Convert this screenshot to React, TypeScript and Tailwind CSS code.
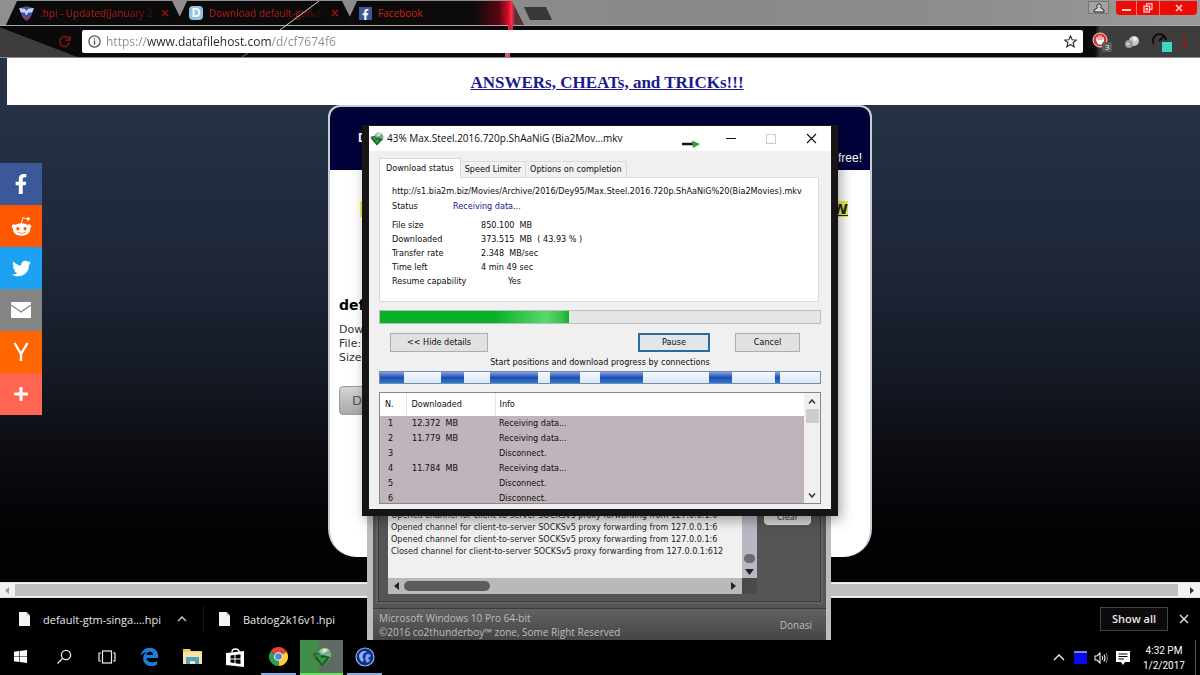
import type { ReactNode } from "react";
import {
  FaFacebookF,
  FaRedditAlien,
  FaTwitter,
  FaPlus,
  FaWindows,
} from "react-icons/fa";

function IdmIcon({ size }: { size: number }) {
  return (
    <svg width={size} height={size} viewBox="0 0 24 24" aria-hidden="true">
      <circle cx="15" cy="9" r="8" fill="#6f9fc0" />
      <path d="M9 5 C11 1 18 0 21 4 C18 7 15 5 13 9 Z" fill="#b9cf6a" />
      <path d="M17 8 L23 8 L22 13 L18 16 Z" fill="#8fb65c" />
      <path d="M14 2 L18 3 L16 7 L13 6 Z" fill="#e2edf5" />
      <path d="M1 8 L8 7 L10 10 L14 10 L22 12 L12 23 L4 14 Z" fill="#125f24" />
      <path d="M4 9 L8 8 L11 13 L18 13 L12 20 Z" fill="#2f9a3f" />
      <path d="M0 11 L4 9 L5 13 Z" fill="#c33a2a" />
    </svg>
  );
}

function ShieldIcon() {
  return (
    <svg width="15" height="15" viewBox="0 0 16 16" aria-hidden="true">
      <path d="M1 2 L8 0 L15 2 Q15 11 8 16 Q1 11 1 2Z" fill="#3450a8" />
      <path d="M0 2 L6 3 L8 5 L10 3 L16 2 L14 7 L10 7 L8 10 L6 7 L2 7Z" fill="#c9d3ee" />
      <path d="M3 9 L7 12 L8 15 L5 13Z M13 9 L9 12 L8 15 L11 13Z" fill="#c03040" />
      <path d="M6 1 L8 3 L10 1Z" fill="#c03040" />
    </svg>
  );
}

function BrowserTab({ icon, title, glow }: { icon: ReactNode; title: string; glow?: boolean }) {
  return (
    <div
      className={
        "-ml-2 flex h-6 w-[178px] items-center pl-[13px] pr-[15px] [clip-path:polygon(11px_0,calc(100%-12px)_0,100%_100%,0_100%)] " +
        (glow
          ? "bg-[linear-gradient(90deg,#0c0a0b_0_72%,#5a0512_86%,#d80a28_91%,#ff3048_93%,#5a3038_95%)]"
          : "bg-[#0b0a0a]")
      }
    >
      <button className="flex min-w-0 flex-1 items-center gap-[6px] text-left">
        <span className="shrink-0">{icon}</span>
        <span
          className={
            "whitespace-nowrap text-[10px] leading-4 " +
            (glow
              ? "text-[#d0200f]"
              : "bg-[linear-gradient(90deg,#c41a12_0_75%,#4a0a06_100%)] bg-clip-text text-transparent")
          }
        >
          {title}
        </span>
      </button>
      <button aria-label="Close tab" className="shrink-0 text-[#a3140f]">
        <svg width="8" height="8" viewBox="0 0 8 8">
          <path d="M1 1 L7 7 M7 1 L1 7" stroke="currentColor" strokeWidth="1.2" />
        </svg>
      </button>
    </div>
  );
}

function BrowserChrome() {
  return (
    <header className="relative bg-[#0a0a0a]">
      <div className="flex h-[26px] items-start border-b border-[#a9a9a9] bg-[linear-gradient(90deg,#8f8f8f,#8b8888_60%,#8d8d8d_80%,#9a9a9a)] pl-[14px] pt-px">
        <BrowserTab icon={<ShieldIcon />} title=".hpi - Updated(January 2" />
        <BrowserTab
          icon={
            <span className="flex h-[14px] w-[14px] items-center justify-center rounded-sm bg-[#8fc3e0] font-['Liberation_Sans'] text-[12px] font-bold leading-none text-white">
              D
            </span>
          }
          title="Download default-gtm-s"
        />
        <BrowserTab
          glow
          icon={
            <span className="flex h-[13px] w-[13px] items-end justify-center bg-[#3b5998] text-white">
              <FaFacebookF size={11} />
            </span>
          }
          title="Facebook"
        />
        <button
          aria-label="New tab"
          className="mt-[6px] h-[13px] w-7 bg-[#383838] [clip-path:polygon(0_0,22px_0,100%_100%,6px_100%)]"
        />
        <div className="flex-1" />
        <button aria-label="Profile" className="flex h-[13px] w-[21px] items-center justify-center border border-[#767676] bg-[#a3a3a3]">
          <svg width="12" height="10" viewBox="0 0 12 10">
            <path d="M6 1 a2 2 0 0 1 1.4 3.6 L11 7 V9 H1 V7 L4.6 4.6 A2 2 0 0 1 6 1Z" fill="#d5d5d5" stroke="#222" strokeWidth="1" />
          </svg>
        </button>
        <div className="ml-[7px] mr-[3px] flex h-[14px] divide-x divide-[#ff7a70] overflow-hidden rounded-b bg-[#ee0a05] text-[#ffd8d4]">
          <button aria-label="Minimize" className="flex w-[21px] items-center justify-center pt-1">
            <svg width="9" height="3"><rect width="9" height="2" fill="currentColor" /></svg>
          </button>
          <button aria-label="Restore" className="flex w-[23px] items-center justify-center">
            <svg width="10" height="10" viewBox="0 0 10 10" fill="none" stroke="currentColor" strokeWidth="1.2">
              <rect x="3.5" y="0.8" width="5.5" height="5.5" />
              <rect x="1" y="3.2" width="5.5" height="5.8" fill="#ee0a05" />
              <rect x="3" y="5.4" width="1.5" height="1.5" />
            </svg>
          </button>
          <button aria-label="Close" className="flex w-[37px] items-center justify-center">
            <svg width="8" height="8" viewBox="0 0 8 8">
              <path d="M1 1 L7 7 M7 1 L1 7" stroke="currentColor" strokeWidth="1.6" />
            </svg>
          </button>
        </div>
      </div>
      <div className="flex h-8 items-center border-b border-[#8a8a8a] bg-[linear-gradient(90deg,transparent_0_1095px,#3d3d3d_1100px)]">
        <div className="flex h-full w-[82px] items-center justify-end bg-[linear-gradient(201deg,#0a0a0a_52%,#3d3b3b_53%)] pr-[11px]">
          <button aria-label="Reload" className="text-[#7d1512]">
            <svg width="13" height="13" viewBox="0 0 14 14" fill="none" stroke="currentColor" strokeWidth="1.8">
              <path d="M11.5 4 A5.3 5.3 0 1 0 12.3 8" />
              <path d="M13 1 V5.5 H8" />
            </svg>
          </button>
        </div>
        <div className="flex h-[23px] flex-1 items-center gap-[5px] rounded-xs bg-white px-[6px]">
          <svg width="13" height="13" viewBox="0 0 13 13" fill="none" stroke="#4a4a4a" aria-hidden="true">
            <circle cx="6.5" cy="6.5" r="5.6" strokeWidth="1.2" />
            <path d="M6.5 5.6 V9.8 M6.5 3.2 V4.6" strokeWidth="1.4" />
          </svg>
          <input
            aria-label="Address"
            defaultValue="https://www.datafilehost.com/d/cf7674f6"
            className="min-w-0 flex-1 bg-[linear-gradient(90deg,#8c8c8c_0_41px,#262626_41px_165px,#8c8c8c_165px)] bg-clip-text text-[12px] leading-5 text-transparent outline-none"
          />
          <button aria-label="Bookmark" className="text-[#333]">
            <svg width="13" height="13" viewBox="0 0 14 14" fill="none" stroke="currentColor" strokeWidth="1.3">
              <path d="M7 1 L8.8 5.1 L13.2 5.4 L9.8 8.3 L10.9 12.7 L7 10.3 L3.1 12.7 L4.2 8.3 L0.8 5.4 L5.2 5.1 Z" />
            </svg>
          </button>
        </div>
        <div className="flex w-[117px] items-center justify-between pl-[9px] pr-[13px]">
          <button aria-label="Ad blocker">
            <svg width="21" height="20" viewBox="0 0 21 20">
              <circle cx="8" cy="8" r="7" fill="#d9322c" stroke="#f4dedd" strokeWidth="1" />
              <path d="M5 8 V5 M7 7 V3.6 M9 7 V3.6 M11 8 V5 M4.6 8 H11.4 L10.4 12 H6.4Z" stroke="#fff" strokeWidth="1.2" fill="#fff" />
              <rect x="10" y="10" width="10" height="10" rx="2" fill="#5b5b5b" />
              <text x="13" y="18" fontSize="8" fill="#fff">3</text>
            </svg>
          </button>
          <button aria-label="Weather">
            <svg width="16" height="14" viewBox="0 0 16 14">
              <circle cx="10" cy="6" r="5" fill="#c9c9c9" />
              <circle cx="5" cy="9" r="4" fill="#9b9b9b" />
              <circle cx="11" cy="4" r="2" fill="#f2f2f2" />
              <circle cx="4" cy="9" r="1.6" fill="#d7d7d7" />
            </svg>
          </button>
          <button aria-label="Speed test">
            <svg width="20" height="20" viewBox="0 0 20 20">
              <path d="M2 12 A6.5 6.5 0 1 1 14 8 M7 9 L12 4" stroke="#0a0a0a" strokeWidth="1.8" fill="none" />
              <rect x="10" y="10" width="10" height="10" fill="#3fd6c2" />
            </svg>
          </button>
          <button aria-label="Menu">
            <svg width="4" height="14" fill="#8c1a17">
              <rect y="1" width="3" height="3" /><rect y="5" width="3" height="3" /><rect y="10" width="3" height="3" />
            </svg>
          </button>
        </div>
      </div>
      <svg className="pointer-events-none absolute left-[240px] top-0" width="90" height="58" aria-hidden="true">
        <path d="M79 1 L40 30" stroke="#d8cfcf" strokeWidth="1" />
        <path d="M8 53 L2 57" stroke="#777" strokeWidth="1" />
      </svg>
      <div className="pointer-events-none absolute left-[508px] top-[25px] h-[5px] w-[5px] bg-[#d82440]" />
      <div className="pointer-events-none absolute left-[505px] top-[53px] h-[4px] w-[5px] bg-[#e0556a]" />
    </header>
  );
}

const shares: { label: string; bg: string; icon: ReactNode }[] = [
  { label: "Facebook", bg: "bg-[#3b5998]", icon: <FaFacebookF size={20} /> },
  { label: "Reddit", bg: "bg-[#ff5700]", icon: <FaRedditAlien size={21} /> },
  { label: "Twitter", bg: "bg-[#1da1f2]", icon: <FaTwitter size={19} /> },
  {
    label: "Email",
    bg: "bg-[#848484]",
    icon: (
      <svg width="20" height="16" viewBox="0 0 20 16">
        <rect width="20" height="16" rx="1" fill="#fff" />
        <path d="M0 3 L10 10 L20 3" stroke="#848484" strokeWidth="1.4" fill="none" />
      </svg>
    ),
  },
  {
    label: "Hacker News",
    bg: "bg-[#ff6600]",
    icon: (
      <svg width="16" height="20" viewBox="0 0 16 20" fill="none" stroke="#fff" strokeWidth="2.4">
        <path d="M1.5 1 L8 12 L14.5 1 M8 11 V19" />
      </svg>
    ),
  },
  { label: "More", bg: "bg-[#ff6550]", icon: <FaPlus size={16} /> },
];

function WebPage() {
  return (
    <main className="relative flex-1 bg-[linear-gradient(180deg,#263247_47px,#222e42_90px,#1f2739_200px,#151a26_310px,#0b0b10_400px,#020204_480px,#020204)]">
      <div className="ml-[7px] flex h-[47px] items-center justify-center bg-white pl-[7px] pt-[2px]">
        <a href="#answers" className="font-['Liberation_Serif',serif] text-[17px] font-bold leading-5 text-[#1a1a8c] underline">
          ANSWERs, CHEATs, and TRICKs!!!
        </a>
      </div>
      <section className="mx-auto w-[544px] rounded-b-[28px] rounded-t-xl border-x-2 border-t-2 border-[#c9ced6] bg-white pb-[142px] font-['DejaVu_Sans',sans-serif] text-black">
        <div className="flex h-[63px] items-end justify-between rounded-t-[10px] bg-[#01013a] px-2 pb-1 text-white">
          <span className="pb-5 pl-5 font-['Liberation_Sans',sans-serif] text-[13px] font-bold leading-4">D</span>
          <span className="font-['Liberation_Sans',sans-serif] text-[12px] leading-4">free!</span>
        </div>
        <a
          href="#download"
          className="ml-auto mr-[22px] mt-[31px] block w-[488px] bg-[#f2ea4a] text-right text-[14px] font-bold leading-4 text-[#222] underline"
        >
          W
        </a>
        <div className="mt-[78px] pl-[9px]">
          <h1 className="text-[14px] font-bold leading-5">def</h1>
          <p className="mt-2 text-[11px] leading-[14px] text-[#333]">
            Dow
            <br />
            File:
            <br />
            Size
          </p>
          <button className="mt-[21px] h-[29px] w-24 rounded border border-[#999] bg-linear-to-b from-[#d5d5d5] to-[#a9a9a9] pl-3 text-left text-[13px] text-[#555]">
            Do
          </button>
        </div>
      </section>
      <nav aria-label="Share" className="absolute left-0 top-[105px] flex flex-col text-white">
        {shares.map((s) => (
          <a key={s.label} href="#share" aria-label={s.label} className={"flex h-[42px] w-[42px] items-center justify-center " + s.bg}>
            {s.icon}
          </a>
        ))}
      </nav>
    </main>
  );
}

function PageScrollbar() {
  return (
    <div className="flex h-4 items-center border-y border-[#e4e4e4] bg-[#f1f1f1]">
      <span className="flex w-[15px] justify-center">
        <svg width="5" height="7"><path d="M4 0 V7 L0 3.5Z" fill="#999" /></svg>
      </span>
      <span className="h-3 flex-1 bg-[#c1bfbe]" />
      <span className="flex w-[22px] justify-center pl-[7px]">
        <svg width="5" height="7"><path d="M0 0 V7 L4 3.5Z" fill="#333" /></svg>
      </span>
    </div>
  );
}

function FileIcon() {
  return (
    <svg width="11" height="14" viewBox="0 0 11 14" aria-hidden="true">
      <path d="M0 0 H7.5 L11 3.5 V14 H0Z" fill="#f4f4f4" />
      <path d="M7.5 0 V3.5 H11" fill="#bbb" />
    </svg>
  );
}

function DownloadShelf() {
  return (
    <div className="flex h-[42px] items-center bg-black pl-[19px] pr-[11px] text-[11px] text-[#e8e8e8]">
      <button className="flex items-center gap-[13px]">
        <FileIcon />
        <span className="pt-[3px]">default-gtm-singa....hpi</span>
      </button>
      <button aria-label="Item options" className="ml-4">
        <svg width="10" height="6" viewBox="0 0 10 6"><path d="M1 5 L5 1 L9 5" stroke="#ccc" strokeWidth="1.4" fill="none" /></svg>
      </button>
      <span className="ml-4 h-7 w-px bg-[#1a1214]" />
      <button className="ml-[15px] flex items-center gap-[13px]">
        <FileIcon />
        <span className="pt-[3px]">Batdog2k16v1.hpi</span>
      </button>
      <div className="flex-1" />
      <button className="h-6 w-[68px] border border-[#444] bg-[#0c0a0b] font-semibold">Show all</button>
      <button aria-label="Close downloads" className="ml-[11px]">
        <svg width="10" height="10" viewBox="0 0 10 10"><path d="M1 1 L9 9 M9 1 L1 9" stroke="#ddd" strokeWidth="1.5" /></svg>
      </button>
    </div>
  );
}

function TaskButton({ label, state, children }: { label: string; state?: "running" | "active"; children: ReactNode }) {
  const tone =
    state === "active"
      ? "border-[#6fe05c] bg-[linear-gradient(90deg,#3f8f4a_0_42%,#5f6a62_46%)]"
      : state === "running"
        ? "border-[#86b0e4]"
        : "border-transparent";
  return (
    <button
      aria-label={label}
      className={"flex h-[35px] items-center justify-center border-b-2 " + (state === "running" ? "mx-1 w-[35px] " : "w-[43px] ") + tone}
    >
      {children}
    </button>
  );
}

function Taskbar() {
  return (
    <footer className="relative z-30 flex h-[35px] items-center bg-black text-white">
      <div className="-ml-px flex items-center">
        <TaskButton label="Start"><FaWindows size={15} /></TaskButton>
        <TaskButton label="Search">
          <svg width="16" height="16" viewBox="0 0 16 16" fill="none" stroke="#eee" strokeWidth="1.3">
            <circle cx="10" cy="6" r="4.6" /><path d="M6.6 9.4 L1.5 14.5" />
          </svg>
        </TaskButton>
        <TaskButton label="Task view">
          <svg width="18" height="14" viewBox="0 0 18 14" fill="none" stroke="#eee" strokeWidth="1.2">
            <rect x="4.5" y="1" width="9" height="12" /><path d="M3 3 H1 V11 H3 M15 3 H17 V11 H15" />
          </svg>
        </TaskButton>
        <TaskButton label="Edge">
          <svg width="19" height="19" viewBox="0 0 24 24" fill="#1b7fdb">
            <path d="M1 11 C2 4 7 1 12.5 1 C19 1 23 6 23 11.5 V14 H8 C8.5 18 12 19.5 15.5 19.5 C18 19.5 20 18.8 21.7 17.8 V22 C19.6 23.2 17 24 14 24 C8 24 4 20 4 14.5 C4 10.5 6.5 7.5 9 6 C6 6.5 3 8.5 1 11Z M8.2 10 H16.5 C16.5 7.5 15 6 12.6 6 C10.3 6 8.6 7.6 8.2 10Z" fillRule="evenodd" />
          </svg>
        </TaskButton>
        <TaskButton label="File Explorer">
          <svg width="19" height="17" viewBox="0 0 19 17">
            <path d="M0 1 H7 L8 3 H19 V16 H0Z" fill="#f0cf6b" />
            <path d="M0 4 H19 V16 H0Z" fill="#f8e4a0" />
            <path d="M3 9 H16 V16 H12 V13 H7 V16 H3Z" fill="#4fa3c7" />
          </svg>
        </TaskButton>
        <TaskButton label="Store">
          <svg width="19" height="20" viewBox="0 0 19 20">
            <path d="M6 5 C6 1 13 1 13 5" stroke="#fff" strokeWidth="1.4" fill="none" />
            <path d="M0 6 L18 4 V20 L0 18Z" fill="#fff" />
            <path d="M4.5 8.6 L8.5 8 V11.5 H4.5Z M9.5 7.9 L14.5 7.2 V11.5 H9.5Z M4.5 12.5 H8.5 V16 L4.5 15.5Z M9.5 12.5 H14.5 V17 L9.5 16.2Z" fill="#000" />
          </svg>
        </TaskButton>
        <TaskButton label="Chrome" state="running">
          <svg width="19" height="19" viewBox="0 0 20 20">
            <path d="M10 10 L1.4 5 A9.9 9.9 0 0 1 18.6 5Z" fill="#e04436" />
            <path d="M10 10 L18.6 5 A9.9 9.9 0 0 1 10 20Z" fill="#fbcc34" />
            <path d="M10 10 L10 20 A9.9 9.9 0 0 1 1.4 5Z" fill="#2fa052" />
            <path d="M10 5.5 H18.8 L18 4 H10Z" fill="#e04436" />
            <circle cx="10" cy="10" r="4.6" fill="#f4f4f4" />
            <circle cx="10" cy="10" r="3.5" fill="#4a86e0" />
          </svg>
        </TaskButton>
        <TaskButton label="Internet Download Manager" state="active"><IdmIcon size={20} /></TaskButton>
        <TaskButton label="SSH client" state="running">
          <svg width="20" height="20" viewBox="0 0 20 20">
            <circle cx="10" cy="10" r="9" fill="#123a9a" stroke="#8fb2ee" strokeWidth="1.2" />
            <circle cx="10" cy="10" r="7" fill="none" stroke="#0b1f5c" strokeWidth="0.8" />
            <path d="M4 8 C6 4 9 3 12 5 L9 6 C7 8 7 11 9 13 L7 15 C5 13 4 11 4 8Z" fill="#8fb2ee" />
            <path d="M11 8 C13 6 15 7 16 9 L13 11 L15 14 L12 16 L10 12Z" fill="#7ea5e8" />
          </svg>
        </TaskButton>
      </div>
      <div className="flex-1" />
      <div className="flex items-center">
        <button aria-label="Hidden icons" className="mr-[9px]">
          <svg width="12" height="7" viewBox="0 0 12 7"><path d="M1 6 L6 1 L11 6" stroke="#eee" strokeWidth="1.4" fill="none" /></svg>
        </button>
        <svg width="13" height="13" className="mr-[7px]" aria-hidden="true">
          <rect width="13" height="13" fill="#0a0af0" /><rect width="13" height="2" fill="#7d86d8" />
        </svg>
        <button aria-label="Volume" className="mr-2">
          <svg width="14" height="12" viewBox="0 0 14 12" fill="none" stroke="#eee" strokeWidth="1.1">
            <path d="M1 4 H3 L6 1 V11 L3 8 H1Z" /><path d="M8 4 Q9.5 6 8 8 M10 2.5 Q12 6 10 9.5" /><path d="M12 1 Q14.5 6 12 11" stroke="#777" />
          </svg>
        </button>
        <button aria-label="Notifications">
          <svg width="14" height="14" viewBox="0 0 14 14">
            <path d="M0 0 H14 V11 H9 L7 14 L5 11 H0Z" fill="#fff" /><path d="M2.5 3 H11.5 M2.5 5.5 H11.5 M2.5 8 H8" stroke="#000" strokeWidth="1" />
          </svg>
        </button>
      </div>
      <div className="ml-[13px] mr-[10px] w-[42px] whitespace-nowrap text-center font-['Roboto',sans-serif] text-[10px] leading-[15px]">
        4:32 PM
        <br />
        1/2/2017
      </div>
      <span className="mr-1 h-[35px] w-px bg-[#555]" />
    </footer>
  );
}

const log = [
  "Opened channel for client-to-server SOCKSv5 proxy forwarding from 127.0.0.1:6",
  "Opened channel for client-to-server SOCKSv5 proxy forwarding from 127.0.0.1:6",
  "Opened channel for client-to-server SOCKSv5 proxy forwarding from 127.0.0.1:6",
  "Closed channel for client-to-server SOCKSv5 proxy forwarding from 127.0.0.1:612",
];

function SshWindow() {
  return (
    <section className="absolute left-[367px] top-[500px] z-10 w-[464px] border-l-[6px] border-r-[5px] border-[#bdbdbd] bg-[#555555] text-[#bdbdbd]">
      <div className="mx-[5px] flex border-x border-b border-[#3a3a3a] pb-[7px] pl-[9px] shadow-[0_0_0_2px_#626262]">
        <div className="w-[354px] bg-[#f0f0f0]">
          <div className="h-[78px] overflow-hidden whitespace-nowrap pl-[3px] pt-[9px] font-['DejaVu_Sans_Condensed','DejaVu_Sans',sans-serif] text-[9px] leading-[12px] text-[#222]">
            {log.map((line, i) => (
              <div key={i}>{line}</div>
            ))}
          </div>
          <div className="flex h-4 items-center bg-[#b9b9bb] px-[6px]">
            <svg width="5" height="8"><path d="M5 0 V8 L0 4Z" fill="#222" /></svg>
            <span className="ml-[5px] h-[10px] w-[86px] rounded-full bg-[#5c5c5c]" />
            <span className="flex-1" />
            <svg width="5" height="8"><path d="M0 0 V8 L5 4Z" fill="#222" /></svg>
          </div>
        </div>
        <div className="flex w-[15px] flex-col items-center bg-[#b8b8c4]">
          <span className="mt-[54px] h-[9px] w-[11px] rounded-full bg-[#6b6b74]" />
          <svg className="mt-[6px]" width="9" height="6"><path d="M0 0 H9 L4.5 6Z" fill="#222" /></svg>
          <span className="mt-auto h-4 w-full bg-[#4a4a4a]" />
        </div>
        <button className="ml-[7px] h-[25px] w-[47px] rounded border border-[#ddd] bg-[#d4d4d4] pt-2 font-['DejaVu_Sans_Condensed','DejaVu_Sans',sans-serif] text-[9px] leading-[14px] text-[#333]">
          Clear
        </button>
      </div>
      <div className="mt-[6px] flex items-center justify-between border-t border-[#3a3a3a] bg-linear-to-b from-[#626262] to-[#444] px-[6px] py-[2px] text-[10px] leading-[14px]">
        <p>
          Microsoft Windows 10 Pro 64-bit
          <br />
          ©2016 co2thunderboy™ zone, Some Right Reserved
        </p>
        <a href="#donasi" className="pr-2">Donasi</a>
      </div>
    </section>
  );
}

const stats = [
  { label: "File size", value: "850.100  MB", pad: "" },
  { label: "Downloaded", value: "373.515  MB  ( 43.93 % )", pad: "" },
  { label: "Transfer rate", value: "2.348  MB/sec", pad: "" },
  { label: "Time left", value: "4 min 49 sec", pad: "" },
  { label: "Resume capability", value: "Yes", pad: "pl-[27px]" },
];

const segments = [24, 37, 23, 26, 48, 12, 30, 20, 44, 66, 23, 43, 5, 40];

const connections = [
  { n: 1, size: "12.372  MB", info: "Receiving data..." },
  { n: 2, size: "11.779  MB", info: "Receiving data..." },
  { n: 3, size: "", info: "Disconnect." },
  { n: 4, size: "11.784  MB", info: "Receiving data..." },
  { n: 5, size: "", info: "Disconnect." },
  { n: 6, size: "", info: "Disconnect." },
];

function DownloadDialog() {
  return (
    <section
      role="dialog"
      aria-label="Download progress"
      className="absolute left-[362px] top-[125px] z-20 w-[476px] border-x-[7px] border-b-[7px] border-t border-[#161414] bg-[#f0f0f0] font-['DejaVu_Sans_Condensed','DejaVu_Sans',sans-serif] text-[9px] text-[#0c0c0c] shadow-[3px_4px_12px_rgba(0,0,0,0.35)]"
    >
      <div className="flex h-[25px] items-center bg-white pl-px pr-[14px]">
        <IdmIcon size={14} />
        <span className="ml-[3px] font-['Open_Sans',sans-serif] text-[10px]">43% Max.Steel.2016.720p.ShAaNiG (Bia2Mov...mkv</span>
        <span className="flex-1" />
        <svg className="mr-[26px] mt-[11px]" width="18" height="8" viewBox="0 0 18 8" aria-hidden="true">
          <path d="M0 4 H12" stroke="#111" strokeWidth="2.5" />
          <path d="M10 0.5 L18 4 L11 8Z" fill="#2f9e41" />
        </svg>
        <button aria-label="Minimize" className="mr-[30px]"><svg width="10" height="2"><rect width="10" height="1" fill="#111" /></svg></button>
        <button aria-label="Maximize" disabled className="mr-[30px]">
          <svg width="10" height="10"><rect x="0.5" y="0.5" width="9" height="9" fill="none" stroke="#ccc" /></svg>
        </button>
        <button aria-label="Close"><svg width="11" height="11" viewBox="0 0 11 11"><path d="M1 1 L10 10 M10 1 L1 10" stroke="#111" strokeWidth="1.1" /></svg></button>
      </div>

      <div className="px-[10px] pb-[5px] pt-[7px]">
        <div role="tablist" className="flex items-end">
          <button role="tab" aria-selected="true" className="relative z-10 -mb-px h-5 border-x border-t border-[#dadada] bg-white px-[6px]">
            Download status
          </button>
          <button role="tab" aria-selected="false" className="h-4 border-r border-t border-[#dadada] px-1">Speed Limiter</button>
          <button role="tab" aria-selected="false" className="h-4 border-r border-t border-[#dadada] px-1">Options on completion</button>
        </div>
        <div className="mr-[2px] h-[125px] border border-[#dadada] bg-white px-3 pt-[5px] leading-[14px]">
          <input
            aria-label="Source address"
            readOnly
            className="block h-4 w-full outline-none"
            defaultValue="http://s1.bia2m.biz/Movies/Archive/2016/Dey95/Max.Steel.2016.720p.ShAaNiG%20(Bia2Movies).mkv"
          />
          <div className="flex">
            <span className="w-[61px]">Status</span>
            <span className="text-[#20208a]">Receiving data...</span>
          </div>
          <dl className="mt-[5px] grid grid-cols-[89px_1fr]">
            {stats.map((s) => (
              <div key={s.label} className="contents">
                <dt className="whitespace-pre">{s.label}</dt>
                <dd className={"whitespace-pre " + s.pad}>{s.value}</dd>
              </div>
            ))}
          </dl>
        </div>

        <div
          role="progressbar"
          aria-valuenow={43}
          aria-label="Total progress"
          className="mt-2 h-[14px] border border-[#bcbcbc] bg-[#e6e6e6]"
        >
          <div className="h-full w-[43%] bg-[linear-gradient(90deg,#06b025_0_60%,#5cd86c_88%,#35c24a_96%,#12b02e)]" />
        </div>

        <div className="mt-[9px] flex pl-[11px] pr-[21px]">
          <button className="h-[19px] w-[98px] border border-[#adadad] bg-[#e1e1e1]">&lt;&lt; Hide details</button>
          <span className="flex-1" />
          <button className="h-[19px] w-[72px] border-2 border-[#2a6c9e] bg-[#e1e6ea]">Pause</button>
          <button className="ml-[25px] h-[19px] w-[65px] border border-[#adadad] bg-[#e1e1e1]">Cancel</button>
        </div>

        <p className="mt-[3px] text-center leading-[14px]">Start positions and download progress by connections</p>

        <div className="mt-[2px] flex h-[13px] border border-[#6f8fb0] bg-linear-to-b from-[#f4f8fd] to-[#dbe6f6]">
          {segments.map((w, i) => (
            <span
              key={i}
              style={{ flexGrow: w }}
              className={i % 2 === 0 && i < 13 ? "bg-linear-to-b from-[#8aa0dc] via-[#1c4fb4] to-[#2f78c8]" : ""}
            />
          ))}
        </div>

        <div className="mt-2 flex h-[112px] border border-[#828790] bg-white">
          <div className="flex-1 overflow-hidden bg-[#c0b4bc]">
            <table className="w-full table-fixed border-collapse text-left">
              <thead className="bg-white">
                <tr className="h-[23px]">
                  <th className="w-[26px] border-r border-[#e5e5e5] pl-[5px] font-normal">N.</th>
                  <th className="w-[89px] border-r border-[#e5e5e5] pl-[5px] font-normal">Downloaded</th>
                  <th className="pl-1 font-normal">Info</th>
                </tr>
              </thead>
              <tbody>
                {connections.map((c) => (
                  <tr key={c.n} className="h-[15px]">
                    <td className="pl-2">{c.n}</td>
                    <td className="whitespace-pre pl-[6px]">{c.size}</td>
                    <td className="pl-1">{c.info}</td>
                  </tr>
                ))}
              </tbody>
            </table>
          </div>
          <div className="flex w-4 flex-col items-center bg-[#f0f0f0] pb-[5px] pt-[6px]">
            <svg width="8" height="5" viewBox="0 0 8 5"><path d="M1 4.5 L4 1 L7 4.5" stroke="#333" strokeWidth="1.5" fill="none" /></svg>
            <span className="mt-[5px] h-[14px] w-[13px] bg-[#cdcdcd]" />
            <svg className="mt-auto" width="8" height="5" viewBox="0 0 8 5"><path d="M1 0.5 L4 4 L7 0.5" stroke="#333" strokeWidth="1.5" fill="none" /></svg>
          </div>
        </div>
      </div>
    </section>
  );
}

export default function App() {
  return (
    <div className="relative flex min-h-screen flex-col overflow-hidden bg-black font-['Open_Sans','Noto_Sans',sans-serif]">
      <BrowserChrome />
      <WebPage />
      <PageScrollbar />
      <DownloadShelf />
      <Taskbar />
      <SshWindow />
      <DownloadDialog />
    </div>
  );
}
